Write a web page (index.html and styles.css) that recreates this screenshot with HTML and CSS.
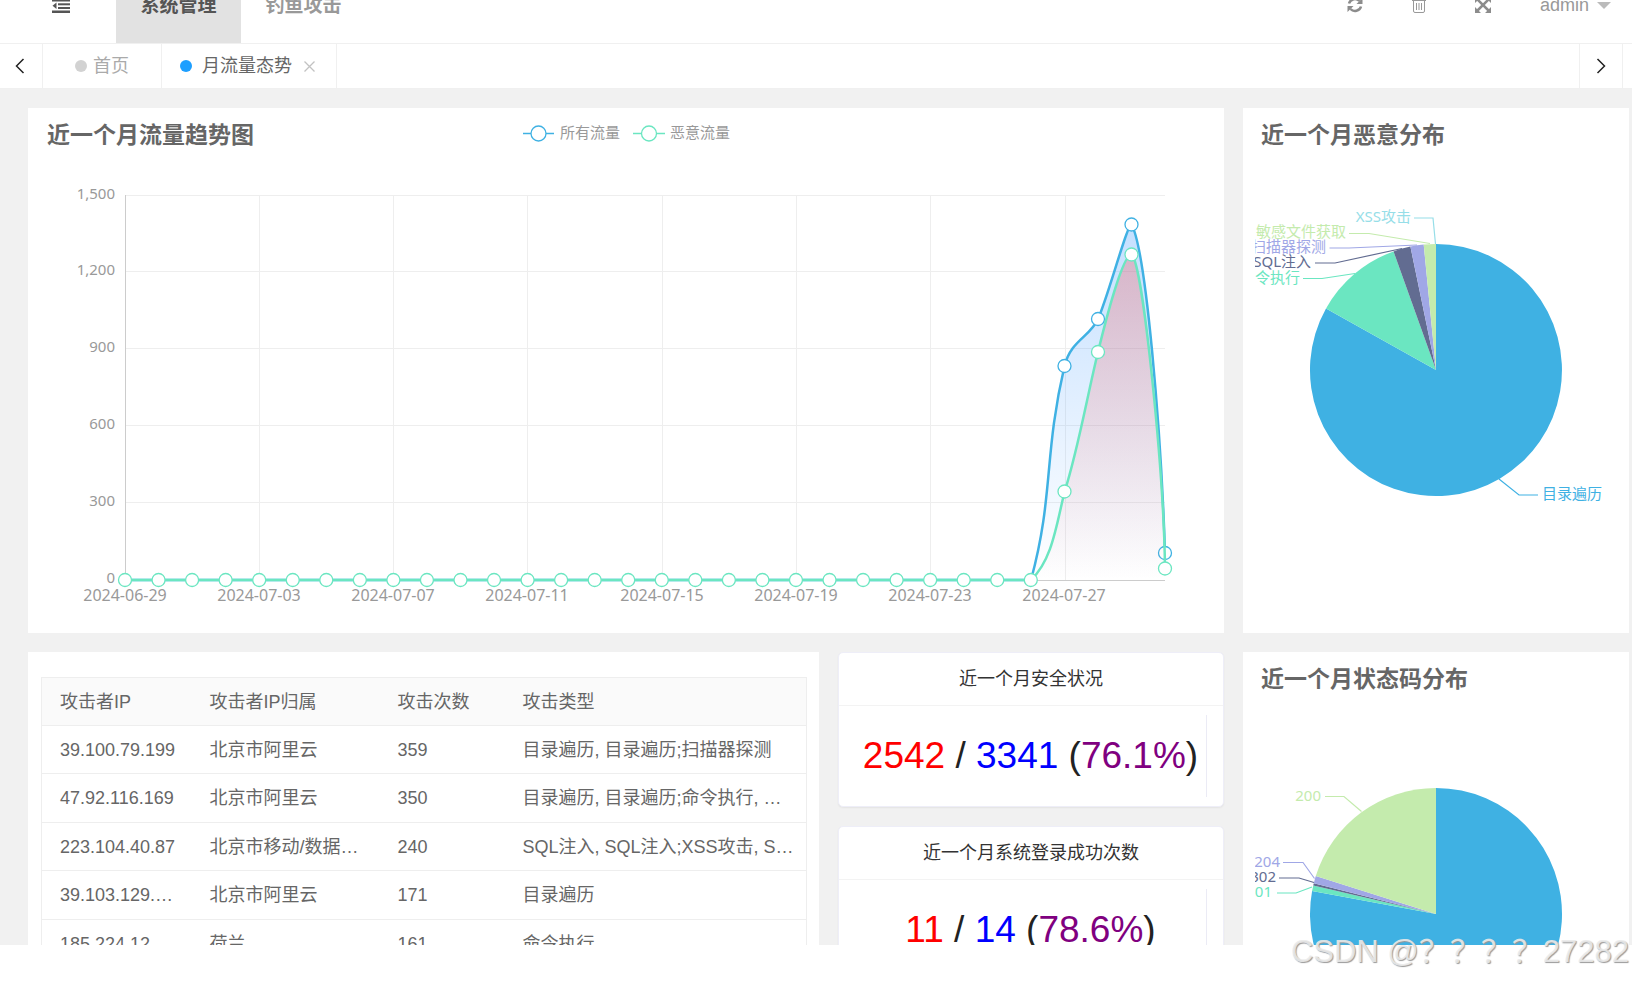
FILE: index.html
```html
<!DOCTYPE html>
<html lang="zh-CN">
<head>
<meta charset="utf-8">
<title>月流量态势</title>
<link rel="stylesheet" href="styles.css">
</head>
<body>
<div class="app">
  <header class="header">
    <nav class="nav">
      <button class="nav-icon nav-fold" type="button" aria-label="收起菜单">
        <svg width="18" height="16" viewBox="0 0 18 16"><g fill="#555"><rect y="-1" width="18" height="2"/><rect y="2.500" width="18" height="2"/><rect x="6" y="6.300" width="12" height="2"/><rect x="6" y="10" width="12" height="2"/><rect y="13.500" width="18" height="2.500"/><path d="M4.500 5.500v6.500L.5 8.800z"/></g></svg>
      </button>
      <a class="nav-item nav-item-active" href="#system">系统管理</a>
      <a class="nav-item" href="#phishing">钓鱼攻击</a>
    </nav>
    <div class="tools">
      <button class="nav-icon" type="button" aria-label="刷新">
        <svg width="16" height="16" viewBox="0 0 16 16" fill="none" stroke="#8c8c8c" stroke-width="2.500"><path d="M2 6.500A6.200 6.200 0 0 1 12.500 4M14 9.500A6.200 6.200 0 0 1 3.500 12"/><path d="M15.500 1v6h-6zM.5 15V9h6z" fill="#8c8c8c" stroke="none"/></svg>
      </button>
      <button class="nav-icon" type="button" aria-label="清理">
        <svg width="14" height="16" viewBox="0 0 14 16" fill="none" stroke="#999"><path d="M0 3.500h14M4.500 3V.5h5V3M1.500 4v10q0 1.500 1.500 1.500h8q1.500 0 1.500-1.500V4M4.500 6v7M7 6v7M9.500 6v7"/></svg>
      </button>
      <button class="nav-icon" type="button" aria-label="全屏">
        <svg width="16" height="16" viewBox="0 0 16 16" fill="#8c8c8c"><path d="M0 0h6L0 6zM16 0v6l-6-6zM0 16v-6l6 6zM16 16h-6l6-6z"/><path d="M2 2l12 12M14 2L2 14" stroke="#8c8c8c" stroke-width="2.500"/></svg>
      </button>
      <button class="user" type="button">admin <span class="caret"></span></button>
    </div>
  </header>

  <div class="tabs">
    <button class="tab-arrow" type="button" aria-label="向左">
      <svg width="10" height="16" viewBox="0 0 10 16" fill="none" stroke="#222" stroke-width="1.500"><path d="M8.500 1L1.500 8l7 7"/></svg>
    </button>
    <a class="tab tab-home" href="#home"><span class="dot"></span>首页</a>
    <a class="tab tab-active" href="#month"><span class="dot"></span>月流量态势
      <svg class="tab-close" width="11" height="11" viewBox="0 0 11 11" fill="none" stroke="#c2c2c2" stroke-width="1.300"><path d="M.5.5l10 10M10.500.5l-10 10"/></svg>
    </a>
    <button class="tab-arrow tab-arrow-right" type="button" aria-label="向右">
      <svg width="10" height="16" viewBox="0 0 10 16" fill="none" stroke="#222" stroke-width="1.500"><path d="M1.500 1l7 7-7 7"/></svg>
    </button>
  </div>

  <main class="board">
    <section class="panel">
      <svg class="chart" viewBox="0 0 1196 525" role="img" aria-label="近一个月流量趋势图">
        <defs>
          <linearGradient id="areaAll" gradientUnits="userSpaceOnUse" x1="0" y1="224" x2="0" y2="580"><stop offset="0" stop-color="#3a96ff" stop-opacity=".3"/><stop offset="1" stop-color="#3a96ff" stop-opacity="0"/></linearGradient>
          <linearGradient id="areaBad" gradientUnits="userSpaceOnUse" x1="0" y1="254" x2="0" y2="580"><stop offset="0" stop-color="#f85555" stop-opacity=".32"/><stop offset="1" stop-color="#e86060" stop-opacity="0"/></linearGradient>
        </defs>
        <text class="chart-title" x="19" y="35">近一个月流量趋势图</text>
        <g class="legend">
          <path class="line-all" d="M495 25.500h31"/><circle class="mark-all" cx="510.500" cy="25.500" r="7.500"/><text x="532" y="30">所有流量</text>
          <path class="line-bad" d="M605 25.500h32"/><circle class="mark-bad" cx="621" cy="25.500" r="7.500"/><text x="642" y="30">恶意流量</text>
        </g>
        <path class="grid" d="M97 87.500H1137M97 163.500H1137M97 240.500H1137M97 317.500H1137M97 394.500H1137M231.500 87V472M365.500 87V472M499.500 87V472M634.500 87V472M768.500 87V472M902.500 87V472M1037.500 87V472"/>
        <path class="axis" d="M97.500 87V472.500H1137"/>
        <g class="labels-y"><text x="87" y="91">1,500</text><text x="87" y="167">1,200</text><text x="87" y="244">900</text><text x="87" y="321">600</text><text x="87" y="398">300</text><text x="87" y="475">0</text></g>
        <g class="labels-x"><text x="97" y="493">2024-06-29</text><text x="231" y="493">2024-07-03</text><text x="365" y="493">2024-07-07</text><text x="499" y="493">2024-07-11</text><text x="634" y="493">2024-07-15</text><text x="768" y="493">2024-07-19</text><text x="902" y="493">2024-07-23</text><text x="1036" y="493">2024-07-27</text></g>
        <g transform="translate(-28 -108)">
          <path fill="url(#areaAll)" d="M1031 580C1054 495 1043.500 456 1064.500 366C1071 340 1090 337 1098 319C1108 297 1127 224.500 1131.500 224.500C1146 250 1161 430 1165 553V580z"/>
          <path class="line-all" d="M125 580H1031C1054 495 1043.500 456 1064.500 366C1071 340 1090 337 1098 319C1108 297 1127 224.500 1131.500 224.500C1146 250 1161 430 1165 553"/>
          <g><circle class="mark-all" cx="1064.500" cy="366" r="6.500"/><circle class="mark-all" cx="1098" cy="319" r="6.500"/><circle class="mark-all" cx="1131.500" cy="224.500" r="6.500"/><circle class="mark-all" cx="1165" cy="553" r="6.500"/></g>
          <path fill="url(#areaBad)" d="M1031 580C1052 560 1056 527 1064.500 492C1078 450 1087 397 1098 352C1107 315 1123 254.500 1131.500 254.500C1143 262 1164 474 1165 569V580z"/>
          <path class="line-bad" d="M125 580H1031C1052 560 1056 527 1064.500 492C1078 450 1087 397 1098 352C1107 315 1123 254.500 1131.500 254.500C1143 262 1164 474 1165 569"/>
          <g id="marksBad"><circle class="mark-bad" cx="1064.500" cy="491.500" r="6.500"/><circle class="mark-bad" cx="1098" cy="352" r="6.500"/><circle class="mark-bad" cx="1131.500" cy="254.500" r="6.500"/><circle class="mark-bad" cx="1165" cy="568.500" r="6.500"/></g>
        </g>
      </svg>
    </section>

    <section class="panel">
      <svg class="chart" viewBox="0 0 386 525" role="img" aria-label="近一个月恶意分布">
        <defs><clipPath id="plot"><rect x="12" width="374" height="525"/></clipPath></defs>
        <text class="chart-title" x="18" y="35">近一个月恶意分布</text>
        <path fill="#3fb1e3" d="M193 262V136A126 126 0 1 1 83 200.500z"/>
        <path fill="#6be6c1" d="M193 262L83 200.500A126 126 0 0 1 150.500 143.400z"/>
        <path fill="#626c91" d="M193 262L150.500 143.400A126 126 0 0 1 167.400 138.600z"/>
        <path fill="#a0a7e6" d="M193 262L167.400 138.600A126 126 0 0 1 180.700 136.600z"/>
        <path fill="#c4ebad" d="M193 262L180.700 136.600A126 126 0 0 1 193 136z"/>
        <g class="leader">
          <path stroke="#96dee8" d="M171 110h19l2.500 26"/>
          <path stroke="#c4ebad" d="M106 125.500h20l61 10"/>
          <path stroke="#a0a7e6" d="M86.500 140h19.500l68-3"/>
          <path stroke="#626c91" d="M72 155h20l67-14.500"/>
          <path stroke="#6be6c1" d="M60 170.500h19l33-5"/>
          <path stroke="#3fb1e3" d="M256 371l20 16h19"/>
        </g>
        <g class="pie-labels" clip-path="url(#plot)">
          <text x="168" y="114" fill="#96dee8">XSS攻击</text>
          <text x="103" y="129" fill="#c4ebad">敏感文件获取</text>
          <text x="83" y="144" fill="#a0a7e6">扫描器探测</text>
          <text x="68" y="159" fill="#626c91">SQL注入</text>
          <text x="57" y="175" fill="#6be6c1">命令执行</text>
          <text x="359" y="391" fill="#3fb1e3">目录遍历</text>
        </g>
      </svg>
    </section>

    <div class="lower">
      <section class="panel table-panel">
        <table class="attackers">
          <colgroup><col class="col-ip"><col class="col-place"><col class="col-count"><col></colgroup>
          <thead><tr><th>攻击者IP</th><th>攻击者IP归属</th><th>攻击次数</th><th>攻击类型</th></tr></thead>
          <tbody>
            <tr><td>39.100.79.199</td><td>北京市阿里云</td><td>359</td><td>目录遍历, 目录遍历;扫描器探测</td></tr>
            <tr><td>47.92.116.169</td><td>北京市阿里云</td><td>350</td><td>目录遍历, 目录遍历;命令执行, …</td></tr>
            <tr><td>223.104.40.87</td><td>北京市移动/数据…</td><td>240</td><td>SQL注入, SQL注入;XSS攻击, S…</td></tr>
            <tr><td>39.103.129.…</td><td>北京市阿里云</td><td>171</td><td>目录遍历</td></tr>
            <tr><td>185.224.12…</td><td>荷兰</td><td>161</td><td>命令执行</td></tr>
          </tbody>
        </table>
      </section>
      <div class="stats">
        <section class="stat">
          <h2 class="stat-title">近一个月安全状况</h2>
          <div class="stat-body"><p class="stat-value"><span class="red">2542</span> / <span class="blue">3341</span> (<span class="purple">76.1%</span>)</p></div>
        </section>
        <section class="stat">
          <h2 class="stat-title">近一个月系统登录成功次数</h2>
          <div class="stat-body"><p class="stat-value"><span class="red">11</span> / <span class="blue">14</span> (<span class="purple">78.6%</span>)</p></div>
        </section>
      </div>
    </div>

    <section class="panel">
      <svg class="chart" viewBox="0 0 386 525" role="img" aria-label="近一个月状态码分布">
        <text class="chart-title" x="18" y="35">近一个月状态码分布</text>
        <path fill="#3fb1e3" d="M193 262V136A126 126 0 1 1 69.100 239.100z"/>
        <path fill="#6be6c1" d="M193 262L69.100 239.100A126 126 0 0 1 70.300 233.400z"/>
        <path fill="#626c91" d="M193 262L70.300 233.400A126 126 0 0 1 70.800 231.300z"/>
        <path fill="#a0a7e6" d="M193 262L70.800 231.300A126 126 0 0 1 72.800 224.100z"/>
        <path fill="#c4ebad" d="M193 262L72.800 224.100A126 126 0 0 1 193 136z"/>
        <g class="leader">
          <path stroke="#c4ebad" d="M82 144.500h19l17.500 15"/>
          <path stroke="#a0a7e6" d="M40 210.500h20l11.500 16"/>
          <path stroke="#626c91" d="M36 226h20l15 4.500"/>
          <path stroke="#6be6c1" d="M34 241h19l16-6"/>
        </g>
        <g class="pie-labels" clip-path="url(#plot)">
          <text x="78" y="149" fill="#c4ebad">200</text>
          <text x="37" y="215" fill="#a0a7e6">204</text>
          <text x="33" y="230" fill="#626c91">302</text>
          <text x="29" y="245" fill="#6be6c1">401</text>
        </g>
      </svg>
    </section>
  </main>
</div>
<div class="watermark">CSDN @？？？？27282</div>
<script src="chart.js"></script>
</body>
</html>
```

FILE: styles.css
```css
* { box-sizing: border-box; }

body {
  margin: 0;
  height: 100vh;
  position: relative;
  overflow: hidden;
  background: #fff;
  color: #666;
  font: 18px/24px "Liberation Sans", "Noto Sans CJK SC", sans-serif;
}

button {
  padding: 0;
  border: 0;
  background: none;
  font: inherit;
  color: inherit;
}

a { color: inherit; text-decoration: none; }

.app {
  display: flex;
  flex-direction: column;
  height: calc(100vh - 37px);
  overflow: hidden;
  background: #f1f1f1;
}

/* header: the bar is scrolled so only its lower part shows */
.header {
  display: flex;
  flex: none;
  justify-content: space-between;
  align-items: flex-end;
  height: 43px;
  overflow: hidden;
  background: #fff;
}
.nav, .tools { display: flex; }
.nav-item {
  width: 125px;
  height: 76px;
  line-height: 78px;
  text-align: center;
  font-size: 19px;
  font-weight: bold;
  color: #999;
}
.nav-item-active { background: #e2e2e2; color: #555; }
.nav-icon {
  display: flex;
  align-items: center;
  justify-content: center;
  width: 64px;
  height: 76px;
}
.nav-fold { width: 116px; justify-content: flex-start; padding-left: 52px; }
.nav-fold svg { overflow: visible; }
.user {
  display: flex;
  align-items: center;
  gap: 8px;
  height: 76px;
  padding: 0 21px 0 25px;
  color: #999;
}
.caret {
  border: 7px solid transparent;
  border-top-color: #bbb;
  border-bottom-width: 0;
}

/* page tabs */
.tabs {
  display: flex;
  flex: none;
  height: 46px;
  padding-right: 9px;
  border-top: 1px solid #f0f0f0;
  border-bottom: 1px solid #f0f0f0;
  background: #fff;
}
.tab-arrow {
  display: flex;
  align-items: center;
  justify-content: center;
  width: 43px;
  padding-right: 2px;
  border-right: 1px solid #f0f0f0;
}
.tab-arrow-right { width: 44px; margin-left: auto; padding: 0; border-left: 1px solid #f0f0f0; }
.tab {
  display: flex;
  align-items: center;
  border-right: 1px solid #f0f0f0;
}
.tab-home { gap: 6px; padding: 0 32px; color: #aaa; }
.tab-active { gap: 10px; padding: 0 21px 0 18px; }
.dot { width: 12px; height: 12px; border-radius: 50%; background: #d2d2d2; }
.tab-active .dot { background: #1e9fff; }
.tab-close { margin-left: 2px; }

/* dashboard */
.board {
  display: grid;
  grid-template-columns: 1196fr 386fr;
  gap: 19px;
  padding: 19px 3px 0 28px;
}
.panel { background: #fff; min-width: 0; }
.lower {
  display: grid;
  grid-template-columns: 791fr 386fr;
  gap: 19px;
}

.chart { display: block; width: 100%; font: 15px "Noto Sans", "Noto Sans CJK SC", sans-serif; }
.chart-title { font-size: 23px; font-weight: bold; fill: #666; }
.legend text, .labels-x text, .labels-y text { fill: #999; }
.labels-x text { text-anchor: middle; font-size: 16px; }
.labels-y text { text-anchor: end; }
.grid { fill: none; stroke: #eee; }
.axis { fill: none; stroke: #ccc; }
.line-all, .line-bad { fill: none; stroke-width: 2.5; }
.line-all { stroke: #3fb1e3; }
.line-bad { stroke: #6be6c1; }
.legend .line-all, .legend .line-bad { stroke-width: 1.5; }
.mark-all, .mark-bad { fill: #fff; stroke-width: 1.3; }
.mark-all { stroke: #3fb1e3; }
.mark-bad { stroke: #6be6c1; }
.leader { fill: none; stroke-width: 1.2; }
.pie-labels { text-anchor: end; }

.table-panel { padding: 25px 12px 15px 13px; }
.attackers {
  width: 100%;
  table-layout: fixed;
  border-collapse: collapse;
  border: 1px solid #eee;
}
.col-ip { width: 150px; }
.col-place { width: 188px; }
.col-count { width: 125px; }
.attackers th, .attackers td {
  height: 48px;
  padding: 0 0 0 18px;
  border-bottom: 1px solid #eee;
  text-align: left;
  line-height: 22px;
  font-weight: normal;
  white-space: nowrap;
}
.attackers thead { background: #fafafa; }
.attackers tr:nth-child(even) td { height: 49px; }

.stats { display: flex; flex-direction: column; gap: 19px; }
.stat {
  border: 1px solid #eeeef8;
  border-radius: 5px;
  background: #fff;
  box-shadow: 0 1px 2px rgba(0, 0, 0, .06);
}
.stat-title {
  margin: 0;
  padding: 14px 0;
  border-bottom: 1px solid #f3f3f3;
  text-align: center;
  font-size: 18px;
  font-weight: normal;
  color: #333;
}
.stat-body { padding: 9px 16px; }
.stat-value {
  margin: 0;
  border-right: 1px solid #ebebf5;
  text-align: center;
  font-size: 37px;
  line-height: 82px;
  white-space: nowrap;
  color: #222;
}
.red { color: #f00; }
.blue { color: #00f; }
.purple { color: #800080; }

.watermark {
  position: absolute;
  right: 3px;
  bottom: 12px;
  font-family: "Liberation Sans", "Noto Sans CJK SC", sans-serif;
  font-size: 31px;
  line-height: 36px;
  color: rgba(235, 235, 235, .9);
  text-shadow: 1px 1px 1px #999;
}
```

FILE: chart.js
```js
// Daily markers along the zero baseline, 2024-06-29 to 2024-07-26
const marks = document.getElementById("marksBad");
for (let day = 0; day < 28; day++) {
  const c = document.createElementNS("http://www.w3.org/2000/svg", "circle");
  c.setAttribute("class", "mark-bad");
  c.setAttribute("cx", 125 + day * 1040 / 31);
  c.setAttribute("cy", 580);
  c.setAttribute("r", 6.5);
  marks.append(c);
}
```
